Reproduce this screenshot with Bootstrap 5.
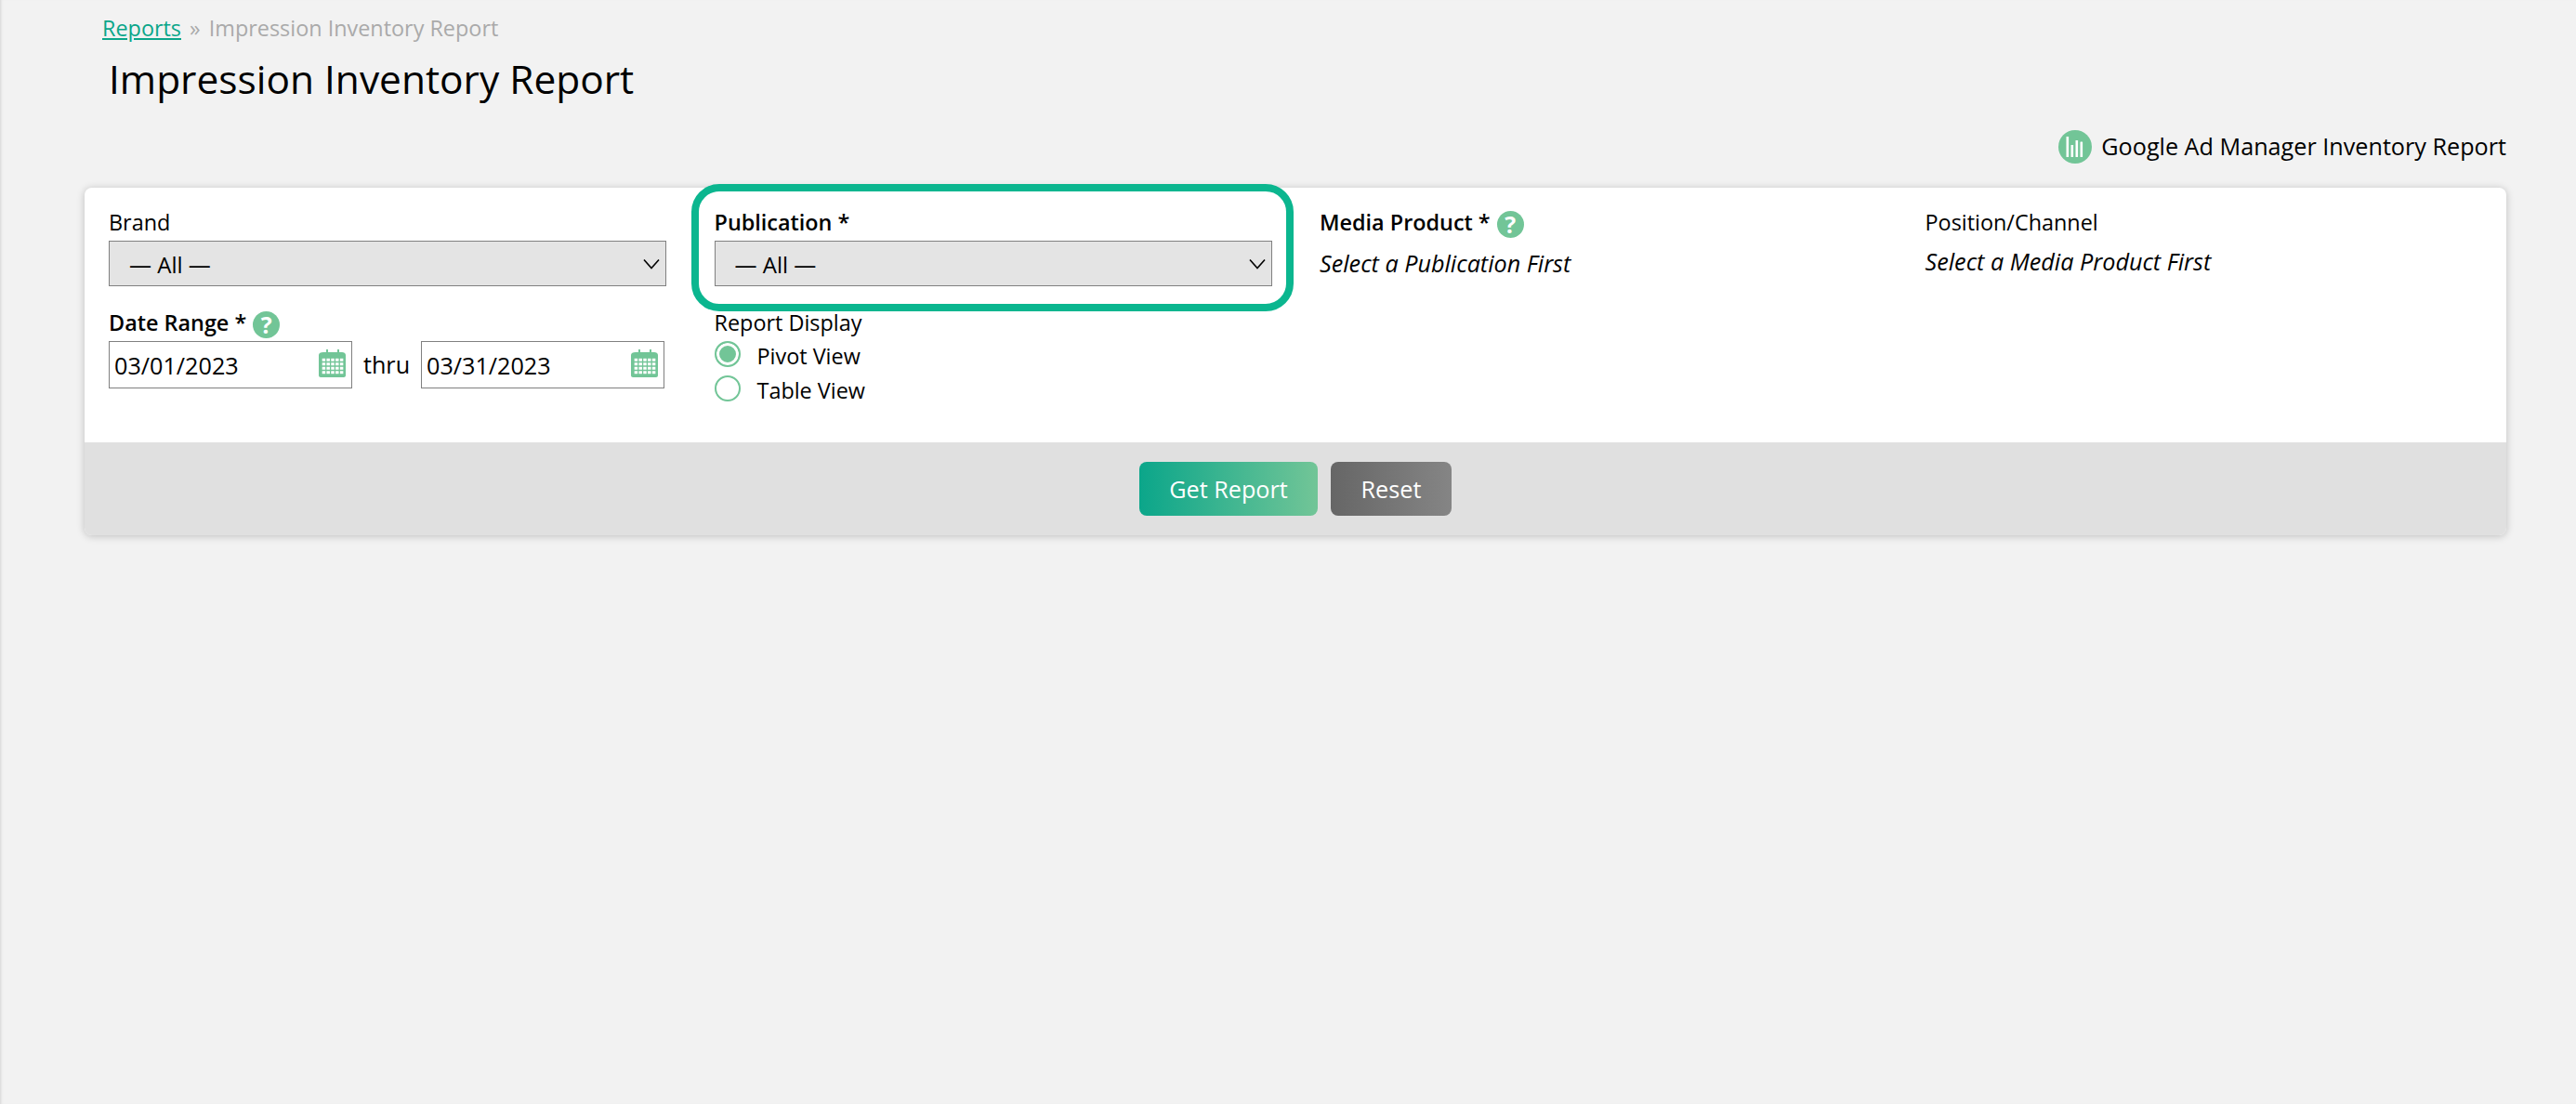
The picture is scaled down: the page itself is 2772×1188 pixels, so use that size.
<!DOCTYPE html>
<html lang="en">
<head>
<meta charset="utf-8">
<title>Impression Inventory Report</title>
<link rel="stylesheet" href="https://cdn.jsdelivr.net/npm/bootstrap@5.3.0/dist/css/bootstrap.min.css">
<style>
body{background:#f2f2f2;font-family:"Open Sans",sans-serif;font-size:23.400px;line-height:33px;color:#000;min-height:1188px;box-shadow:inset 3px 0 3px -2px rgba(0,0,0,.12)}
.crumbs{padding:14px 0 0 110px;height:47px;color:#aaa}
.crumbs a{color:#0ba68a}
.crumbs .sep{margin:0 3px}
.page-title{font-size:42.450px;line-height:54px;font-weight:400;margin:0;padding:11px 0 0 117px;height:67px}
.top-link{height:39px;margin-top:24px;padding-right:75px;margin-bottom:0;font-size:25.200px}
.top-link a{color:#000;text-decoration:none;gap:10px}
.report-box{margin:25px 75px 0 91px;position:relative;border:0;border-radius:8px;box-shadow:0 1px 8px rgba(0,0,0,.22);background:#fff}
.form-area{height:274px}
.fcol{padding:24px 26px 0}
.flabel{display:flex;align-items:center;height:33px;margin:0;padding-bottom:6px}
.flabel b{font-weight:600}
.help{display:inline-flex;align-items:center;justify-content:center;width:29px;height:29px;border-radius:50%;background:#72c597;color:#fff;font-size:25px;font-weight:700;margin-left:7px;position:relative;top:2px}
.sel{display:block;width:600px;height:49px;border:1px solid #808080;background-color:#e4e4e4;border-radius:0;font-size:24px;line-height:33px;padding:8px 40px 6px 21px;color:#000;margin-bottom:26px;appearance:none;font-family:inherit;background-image:url("data:image/svg+xml,%3Csvg xmlns='http://www.w3.org/2000/svg' viewBox='0 0 18 12'%3E%3Cpath d='M1 1.5 9 10.5 17 1.5' fill='none' stroke='%23000' stroke-width='1.6'/%3E%3C/svg%3E");background-repeat:no-repeat;background-position:right 6px center;background-size:18px 12px}
.date-row{display:flex;align-items:center;width:598px;justify-content:space-between;font-size:25.200px}
.date-box{position:relative;width:262px;height:51px}
.date-box input{width:100%;height:100%;border:1px solid #808080;border-radius:0;padding:0 5px;font-size:25.200px;color:#000;font-family:inherit;background:#fff}
.date-box svg{position:absolute;right:6px;top:9px}
.radio-line{display:flex;align-items:center;height:28px;margin-bottom:9px;line-height:32px}
.radio-line input{appearance:none;width:28px;height:28px;border:2px solid #72c597;border-radius:50%;background:#fff;margin:0 18px 0 0;flex:none}
.radio-line input:checked{background:#72c597;box-shadow:inset 0 0 0 3px #fff}
.radio-text{padding-top:3px}
.hint{font-style:italic;margin-top:8px;font-size:25.200px}
.hint-up{margin-top:6px}
.form-foot{height:100px;background:#e0e0e0;border-radius:0 0 8px 8px;gap:14px}
.btn-go,.btn-clear{height:58px;border:0;border-radius:8px;color:#fff;font-size:25.200px;line-height:33px;padding:0;font-family:inherit}
.btn-go{width:192px;background:linear-gradient(90deg,#0ba68a,#72c597)}
.btn-clear{width:130px;background:linear-gradient(90deg,#666,#858585)}
.callout{position:absolute;left:653px;top:-4px;width:648px;height:137px;border:8px solid #0bb68f;border-radius:30px;pointer-events:none}
</style>
</head>
<body>
<div class="crumbs"><a href="#">Reports</a> <span class="sep">»</span> Impression Inventory Report</div>
<h1 class="page-title">Impression Inventory Report</h1>
<div class="top-link d-flex justify-content-end align-items-center">
  <a href="#" class="d-flex align-items-center">
    <svg width="36" height="36" viewBox="0 0 36 36" aria-hidden="true"><circle cx="18" cy="18" r="18" fill="#72c597"/><g fill="#fff"><rect x="8.5" y="7" width="2.6" height="22" rx=".6"/><rect x="13.5" y="16" width="2.6" height="13" rx=".6"/><rect x="18.5" y="11" width="2.6" height="18" rx=".6"/><rect x="23.5" y="12.500" width="2.6" height="16.500" rx=".6"/></g></svg>
    Google Ad Manager Inventory Report
  </a>
</div>
<div class="card report-box">
  <div class="form-area row g-0">
    <div class="col-3 fcol">
      <label class="flabel">Brand</label>
      <select class="sel"><option>— All —</option></select>
      <label class="flabel"><b>Date Range *</b><span class="help">?</span></label>
      <div class="date-row">
        <div class="date-box"><input type="text" value="03/01/2023"><svg width="30" height="30" viewBox="0 0 30 30" aria-hidden="true"><path fill="#72c597" d="M5 3h3V0h2v3h10V0h2v3h3c2 0 4 1 4 3v22c0 1-1 2-2 2H2c-1 0-2-1-2-2V6c0-2 2-3 5-3z"/><path fill="#fff" d="M3 9h24v18H3z"/><path stroke="#72c597" stroke-width="1.300" fill="none" d="M3 9h24M3 13.500h24M3 18h24M3 22.500h24M3 27h24M3 9v18M7.800 9v18M12.600 9v18M17.400 9v18M22.200 9v18M27 9v18"/></svg></div>
        <span>thru</span>
        <div class="date-box"><input type="text" value="03/31/2023"><svg width="30" height="30" viewBox="0 0 30 30" aria-hidden="true"><path fill="#72c597" d="M5 3h3V0h2v3h10V0h2v3h3c2 0 4 1 4 3v22c0 1-1 2-2 2H2c-1 0-2-1-2-2V6c0-2 2-3 5-3z"/><path fill="#fff" d="M3 9h24v18H3z"/><path stroke="#72c597" stroke-width="1.300" fill="none" d="M3 9h24M3 13.500h24M3 18h24M3 22.500h24M3 27h24M3 9v18M7.800 9v18M12.600 9v18M17.400 9v18M22.200 9v18M27 9v18"/></svg></div>
      </div>
    </div>
    <div class="col-3 fcol">
      <label class="flabel"><b>Publication *</b></label>
      <select class="sel"><option>— All —</option></select>
      <label class="flabel">Report Display</label>
      <label class="radio-line"><input type="radio" name="disp" checked><span class="radio-text">Pivot View</span></label>
      <label class="radio-line"><input type="radio" name="disp"><span class="radio-text">Table View</span></label>
    </div>
    <div class="col-3 fcol">
      <label class="flabel"><b>Media Product *</b><span class="help">?</span></label>
      <div class="hint">Select a Publication First</div>
    </div>
    <div class="col-3 fcol">
      <label class="flabel">Position/Channel</label>
      <div class="hint hint-up">Select a Media Product First</div>
    </div>
  </div>
  <div class="form-foot d-flex justify-content-center align-items-center">
    <button type="button" class="btn btn-go">Get Report</button>
    <button type="button" class="btn btn-clear">Reset</button>
  </div>
  <div class="callout"></div>
</div>
<script src="https://cdn.jsdelivr.net/npm/bootstrap@5.3.0/dist/js/bootstrap.bundle.min.js"></script>
</body>
</html>
